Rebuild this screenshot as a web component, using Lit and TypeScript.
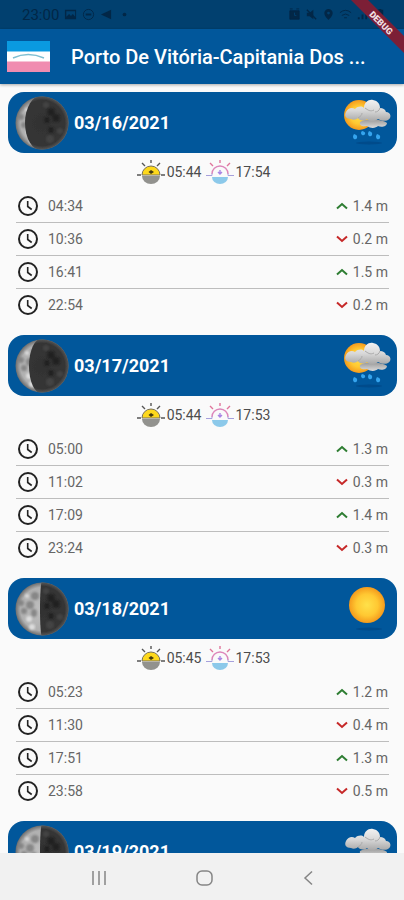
import { LitElement, html, svg, css, nothing } from "lit";
import { customElement, property } from "lit/decorators.js";

type Weather = "rain" | "sun" | "cloud";
interface Tide { time: string; height: string; rising: boolean }
interface Day { date: string; shade: number; weather: Weather; sunrise?: string; sunset?: string; tides: Tide[] }

const tide = (time: string, height: string, rising: boolean): Tide => ({ time, height, rising });

const DAYS: Day[] = [
  { date: "03/16/2021", shade: 17, weather: "rain", sunrise: "05:44", sunset: "17:54",
    tides: [tide("04:34", "1.4 m", true), tide("10:36", "0.2 m", false), tide("16:41", "1.5 m", true), tide("22:54", "0.2 m", false)] },
  { date: "03/17/2021", shade: 13, weather: "rain", sunrise: "05:44", sunset: "17:53",
    tides: [tide("05:00", "1.3 m", true), tide("11:02", "0.3 m", false), tide("17:09", "1.4 m", true), tide("23:24", "0.3 m", false)] },
  { date: "03/18/2021", shade: 2, weather: "sun", sunrise: "05:45", sunset: "17:53",
    tides: [tide("05:23", "1.2 m", true), tide("11:30", "0.4 m", false), tide("17:51", "1.3 m", true), tide("23:58", "0.5 m", false)] },
  { date: "03/19/2021", shade: 2, weather: "cloud", tides: [] },
];

@customElement("moon-phase")
class MoonPhase extends LitElement {
  @property({ type: Number }) shade = 0;
  static styles = css`
    :host { display: block; width: 54px; height: 54px; }
    svg { display: block; width: 100%; height: 100%; }
  `;
  render() {
    return html`<svg viewBox="0 0 54 54" aria-hidden="true">
      <defs>
        <radialGradient id="lit" cx="50%" cy="50%" r="50%">
          <stop offset="0" stop-color="#c0c0c0"></stop><stop offset=".8" stop-color="#b0b0b0"></stop><stop offset="1" stop-color="#666"></stop>
        </radialGradient>
        <radialGradient id="dark" gradientUnits="userSpaceOnUse" cx="27" cy="27" r="27">
          <stop offset="0" stop-color="#323232"></stop><stop offset=".85" stop-color="#363636"></stop><stop offset="1" stop-color="#5a5a5a"></stop>
        </radialGradient>
        <filter id="soft"><feGaussianBlur stdDeviation="1"></feGaussianBlur></filter>
        <filter id="edge"><feGaussianBlur stdDeviation=".6"></feGaussianBlur></filter>
        <clipPath id="disc"><circle cx="27" cy="27" r="26.5"></circle></clipPath>
      </defs>
      <g clip-path="url(#disc)">
        <rect width="54" height="54" fill="url(#lit)"></rect>
        <g filter="url(#soft)" fill="#7c7c7c" opacity=".8">
          <circle cx="15" cy="23" r="4"></circle><circle cx="9" cy="29" r="3"></circle>
          <circle cx="20" cy="14" r="4"></circle><circle cx="6" cy="21" r="3"></circle>
          <ellipse cx="19" cy="31" rx="3" ry="4"></ellipse>
        </g>
        <g filter="url(#soft)" fill="#dedede">
          <circle cx="17" cy="45" r="3"></circle><circle cx="12" cy="14" r="2"></circle><circle cx="14" cy="37" r="3"></circle>
        </g>
        <path d="M27 -1 A28 28 0 0 1 27 55 A${this.shade} 28 0 0 1 27 -1Z" fill="url(#dark)" filter="url(#edge)"></path>
        <g filter="url(#soft)" fill="#1f1f1f" opacity=".8">
          <circle cx="36" cy="16" r="4"></circle><circle cx="41" cy="22" r="4"></circle>
          <circle cx="32" cy="24" r="3"></circle><circle cx="36" cy="34" r="3"></circle>
        </g>
        <g filter="url(#soft)" fill="#4b4b4b" opacity=".7">
          <circle cx="35" cy="43" r="4"></circle><circle cx="31" cy="9" r="3"></circle><circle cx="45" cy="35" r="3"></circle>
        </g>
      </g>
    </svg>`;
  }
}

@customElement("weather-icon")
class WeatherIcon extends LitElement {
  @property() kind: Weather = "sun";
  static styles = css`
    :host { display: block; width: 50px; height: 50px; }
    svg { display: block; width: 100%; height: 100%; }
  `;
  render() {
    const sun = svg`<circle cx="24" cy="21" r="18" fill="url(#sun)"></circle>`;
    const halfSun = svg`<circle cx="16" cy="17" r="15" fill="url(#sun)"></circle>`;
    const drops = svg`<g fill="#35a4ee">
        <path d="M11 36 q4 1 3 4 q-1 2 -3 1 q-2 -2 0 -5Z"></path><path d="M19 33 q4 1 3 3 q-1 2 -3 1 q-2 -2 0 -4Z"></path>
        <path d="M26 33 q4 1 3 4 q-1 2 -3 1 q-2 -2 0 -5Z"></path><path d="M34 36 q4 1 3 4 q-1 2 -3 1 q-2 -2 0 -5Z"></path>
      </g>`;
    const clouds = svg`
      <path d="M17 24 C16 28 20 29 24 28 C28 31 33 30 35 28 C39 30 44 28 44 25 C40 21 22 20 17 24Z" fill="url(#under)"></path>
      <path d="M8 21 C3 21 1 18 3 14 C5 10 9 9 12 11 C15 8 19 8 21 10 C21 4 26 1 30 2 C35 3 37 6 37 10 C40 10 42 11 43 14 C48 14 49 20 45 22 C41 24 37 22 35 21 C31 24 27 24 24 21 C20 24 16 22 15 20 C13 22 10 22 8 21Z" fill="url(#cloud)"></path>
      <path d="M22 10 C25 12 27 14 31 12 M37 10 C36 13 34 14 32 14 M15 20 C18 18 19 17 19 15" fill="none" stroke="#a9a9a9" stroke-width="1" filter="url(#soft)"></path>`;
    return html`<svg viewBox="0 0 50 50" aria-hidden="true">
      <defs>
        <radialGradient id="sun"><stop offset="0" stop-color="#ffe14a"></stop><stop offset=".6" stop-color="#ffc832"></stop><stop offset="1" stop-color="#f49a1c"></stop></radialGradient>
        <linearGradient id="cloud" x2="0" y2="1"><stop offset="0" stop-color="#f2f2f2"></stop><stop offset=".5" stop-color="#d8d8d8"></stop><stop offset="1" stop-color="#a8a8a8"></stop></linearGradient>
        <linearGradient id="under" x2="0" y2="1"><stop offset="0" stop-color="#999"></stop><stop offset="1" stop-color="#dadada"></stop></linearGradient>
        <filter id="soft"><feGaussianBlur stdDeviation=".5"></feGaussianBlur></filter>
      </defs>
      <ellipse cx="26" cy="45" rx="13" ry="1.500" fill="#004684" opacity=".7"></ellipse>
      ${this.kind === "sun" ? sun : nothing}
      ${this.kind === "rain" ? halfSun : nothing}
      ${this.kind === "sun" ? nothing : clouds}
      ${this.kind === "rain" ? drops : nothing}
    </svg>`;
  }
}

@customElement("tide-day")
class TideDay extends LitElement {
  @property({ attribute: false }) day!: Day;
  static styles = css`
    :host { display: block; }
    .header { display: flex; align-items: center; height: 61px; padding: 0 4px 0 7px; box-sizing: border-box;
      border-radius: 16px; background: #01579b; color: #fff; }
    h2 { flex: 1; margin: 0 0 0 5px; font-size: 18px; line-height: 24px; font-weight: 700; }
    .sun { display: flex; justify-content: center; align-items: center; height: 37px; font-size: 14px; color: #4c4c4c; }
    .sun svg { width: 30px; height: 26px; margin: 0 1px; }
    .sun span + svg { margin-left: 3px; }
    ul { list-style: none; margin: 0 8px; padding: 0; }
    li { display: flex; align-items: center; height: 32px; font-size: 14px; color: #666; }
    li + li { border-top: 1px solid #bdbdbd; }
    .clock { width: 24px; height: 24px; margin-right: 8px; }
    .time { flex: 1; }
    .arrow { width: 12px; height: 8px; margin-right: 5px; }
    .level { margin-right: 1px; }
  `;
  render() {
    const d = this.day;
    return html`<section>
      <header class="header">
        <moon-phase .shade=${d.shade}></moon-phase>
        <h2>${d.date}</h2>
        <weather-icon .kind=${d.weather}></weather-icon>
      </header>
      ${d.sunrise ? html`<div class="sun">
        <svg viewBox="0 0 30 26" role="img" aria-label="Sunrise">
          <path d="M15 1v3 M6 4l3 3 M24 4l-3 3 M1 16h4 M25 16h4" stroke="#555" stroke-width="1.400" fill="none"></path>
          <path d="M6 16a9 9 0 0 1 18 0Z" fill="#fdd81c" stroke="#77705a"></path>
          <path d="M6 17h18a9 8 0 0 1-18 0Z" fill="#92928e"></path>
          <path d="M12.500 13l2.500-2 3 2-3 2Z" fill="#443a10"></path>
        </svg>
        <span>${d.sunrise}</span>
        <svg viewBox="0 0 30 26" role="img" aria-label="Sunset">
          <path d="M15 1v3 M5 4l3 3 M25 4l-3 3" stroke="#e0759b" stroke-width="1.400" fill="none"></path>
          <path d="M7 15a8 8 0 0 1 16 0" stroke="#dd86ba" stroke-width="1.400" fill="none"></path>
          <path d="M1 16.500h6v-2 M29 16.500h-6v-2" stroke="#a6a0dc" fill="none"></path>
          <path d="M15 11v4 M13 13l2 2 2-2" stroke="#a884e4" stroke-width="1.400" fill="none"></path>
          <path d="M7 18h16a8 7 0 0 1-16 0Z" fill="#8cc9ea"></path>
        </svg>
        <span>${d.sunset}</span>
      </div>` : nothing}
      ${d.tides.length ? html`<ul>
        ${d.tides.map((t) => html`<li>
          <svg class="clock" viewBox="0 0 24 24" fill="none" stroke="#222" aria-hidden="true">
            <circle cx="12" cy="12" r="9" stroke-width="2"></circle>
            <path d="M11.700 7v5.500l4 3" stroke-width="1.600"></path>
          </svg>
          <span class="time">${t.time}</span>
          <svg class="arrow" viewBox="0 0 12 8" fill="none" stroke-width="2" role="img" aria-label=${t.rising ? "Rising" : "Falling"}>
            ${t.rising
              ? svg`<path d="M1 6.500L6 2L11 6.500" stroke="#2e7d32"></path>`
              : svg`<path d="M1 1.500L6 6L11 1.500" stroke="#c62828"></path>`}
          </svg>
          <span class="level">${t.height}</span>
        </li>`)}
      </ul>` : nothing}
    </section>`;
  }
}

@customElement("app-root")
class AppRoot extends LitElement {
  static styles = css`
    :host { display: flex; flex-direction: column; height: 100vh; position: relative; overflow: hidden;
      background: #fafafa; font-family: Roboto, "Liberation Sans", sans-serif; }
    .status { display: flex; align-items: center; flex: none; height: 29px; padding: 0 18px 0 22px; box-sizing: border-box;
      background: #01406f; color: #022747; font-size: 15px; }
    .status svg { width: 13px; height: 13px; margin-left: 5px; }
    .status .gap ~ svg { margin-left: 4px; }
    .gap { flex: 1; }
    .bar { display: flex; align-items: center; flex: none; height: 55px; padding: 0 24px 0 7px; gap: 21px;
      background: #01579b; color: #fff; box-shadow: 0 1px 3px #00000055; z-index: 1; }
    .flag { flex: none; width: 43px; height: 31px; }
    h1 { margin: 0; font-size: 20px; line-height: 24px; font-weight: 500; white-space: nowrap; }
    main { flex: 1; min-height: 0; overflow: auto; scrollbar-width: none; display: flex; flex-direction: column; gap: 14px; padding: 8px 7px 8px 8px; }
    tide-day { flex: none; }
    nav { display: flex; justify-content: space-between; align-items: center; flex: none; height: 47px; padding: 0 80px 0 83px; background: #f1f1f1; }
    button { display: flex; width: 32px; height: 40px; padding: 0; border: 0; background: none; align-items: center; justify-content: center; }
    button svg { width: 20px; height: 20px; fill: none; stroke: #858585; stroke-width: 1.500; }
    .ribbon { position: absolute; top: 0; right: 0; z-index: 2; width: 60px; height: 60px; }
    .ribbon text { font: 900 9px Roboto, sans-serif; fill: #f0dfe2; }
  `;
  render() {
    return html`
      <div class="status">
        <span>23:00</span>
        <svg viewBox="0 0 14 14" fill="currentColor"><path fill-rule="evenodd" d="M1 2h12v10H1Z M2.500 3.500v6l3-3 2 2 2-2 2.500 3v-6Z"></path></svg>
        <svg viewBox="0 0 14 14" fill="none" stroke="currentColor"><circle cx="7" cy="7" r="5.500"></circle><path d="M4 7h6" stroke-width="2"></path></svg>
        <svg viewBox="0 0 14 14" fill="currentColor"><path d="M1 7l11-5v10Z"></path></svg>
        <svg viewBox="0 0 14 14" fill="currentColor"><circle cx="7" cy="7" r="2"></circle></svg>
        <span class="gap"></span>
        <svg viewBox="0 0 14 14"><path d="M2 3h10v9H2Z M2 1h3 M9 1h3" fill="currentColor" stroke="currentColor"></path><path d="M7 5v3h2" stroke="#01406f" fill="none"></path></svg>
        <svg viewBox="0 0 14 14" fill="currentColor"><path d="M2 5h3l4-3v10l-4-3H2Z"></path><path d="M2 2l10 10" stroke="currentColor" stroke-width="1.500"></path></svg>
        <svg viewBox="0 0 14 14" fill="currentColor"><path fill-rule="evenodd" d="M7 1a4.500 4.500 0 0 1 4.500 4.500C11.500 9 7 13 7 13S2.500 9 2.500 5.500A4.500 4.500 0 0 1 7 1Z M7 4a1.500 1.500 0 1 0 0 3a1.500 1.500 0 0 0 0-3Z"></path></svg>
        <svg viewBox="0 0 14 14" fill="none" stroke="currentColor"><path d="M1 5q6-5 12 0 M3 8q4-3 8 0 M5.500 10.500h3"></path></svg>
        <svg viewBox="0 0 14 14" fill="currentColor"><path d="M2 12v-2h2v2Z M6 12V7h2v5Z M10 12V3h2v9Z"></path></svg>
        <svg viewBox="0 0 14 14" fill="currentColor"><path d="M4 2h2V1h3v1h2v11H4Z"></path></svg>
      </div>
      <header class="bar">
        <svg class="flag" viewBox="0 0 43 31" role="img" aria-label="Espírito Santo flag">
          <path d="M0 0h43v11H0Z" fill="#0a9ae0"></path><path d="M0 10.500h43v10.500H0Z" fill="#fff"></path><path d="M0 20.500h43V31H0Z" fill="#f08cb0"></path>
          <path d="M6 17Q21 10 37 17" fill="none" stroke="#7fbfd2" stroke-width="1.500"></path>
        </svg>
        <h1>Porto De Vitória-Capitania Dos ...</h1>
      </header>
      <main>${DAYS.map((d) => html`<tide-day .day=${d}></tide-day>`)}</main>
      <nav>
        <button aria-label="Recent apps"><svg viewBox="0 0 20 20"><path d="M4 4v14 M10 4v14 M16 4v14"></path></svg></button>
        <button aria-label="Home"><svg viewBox="0 0 20 20"><rect x="3" y="4" width="15" height="14" rx="5"></rect></svg></button>
        <button aria-label="Back"><svg viewBox="0 0 20 20"><path d="M14 4.500L7 11L14 17.500"></path></svg></button>
      </nav>
      <svg class="ribbon" viewBox="0 0 60 60">
        <path d="M7 0H24L60 36V53Z" fill="#7c1f36"></path>
        <text x="37" y="26" text-anchor="middle" transform="rotate(45 37 23)">DEBUG</text>
      </svg>
    `;
  }
}
